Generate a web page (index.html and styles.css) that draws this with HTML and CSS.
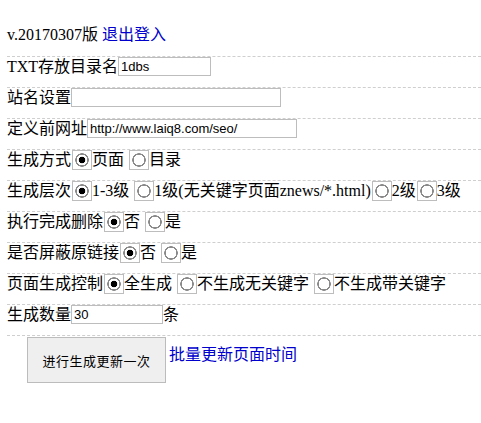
FILE: index.html
```html
<!DOCTYPE html>
<html lang="zh-CN">
<head>
<meta charset="utf-8">
<title>生成设置</title>
<link rel="stylesheet" href="styles.css">
</head>
<body>
<div class="page">
  <div class="row row-first">v.20170307版 <a class="link" href="#">退出登入</a></div>
  <div class="row">TXT存放目录名<input class="txt w93" type="text" value="1dbs"></div>
  <div class="row">站名设置<input class="txt w210" type="text" value=""></div>
  <div class="row">定义前网址<input class="txt w210" type="text" value="http://www.laiq8.com/seo/"></div>
  <div class="row">生成方式<input class="radio" type="radio" name="m" checked>页面 <input class="radio" type="radio" name="m">目录</div>
  <div class="row">生成层次<input class="radio" type="radio" name="l" checked>1-3级 <input class="radio" type="radio" name="l">1级(无关键字页面znews/*.html)<input class="radio" type="radio" name="l">2级<input class="radio" type="radio" name="l">3级</div>
  <div class="row">执行完成删除<input class="radio" type="radio" name="d" checked>否 <input class="radio" type="radio" name="d">是</div>
  <div class="row">是否屏蔽原链接<input class="radio" type="radio" name="s" checked>否 <input class="radio" type="radio" name="s">是</div>
  <div class="row">页面生成控制<input class="radio" type="radio" name="c" checked>全生成 <input class="radio" type="radio" name="c">不生成无关键字 <input class="radio" type="radio" name="c">不生成带关键字</div>
  <div class="row">生成数量<input class="txt w92" type="text" value="30">条</div>
  <div class="row row-last"><button class="btn" type="button">进行生成更新一次</button><a class="link link-side" href="#">批量更新页面时间</a></div>
</div>
</body>
</html>
```
FILE: styles.css
```css
html, body {
  margin: 0;
  padding: 0;
  background: #fff;
}
body {
  font-family: "Liberation Serif", "Noto Sans CJK SC", serif;
  font-size: 16px;
  color: #000;
}
.page {
  padding-left: 7px;
}
.row {
  border-top: 1px dashed #cfcfcf;
  height: 20px;
  line-height: 20px;
  padding-bottom: 10px;
  white-space: nowrap;
}
.row-first {
  border-top: 0;
  padding-top: 25px;
  padding-bottom: 11px;
}
.row-last {
  height: auto;
  display: flex;
  align-items: flex-start;
  padding-bottom: 0;
}
.link {
  color: #0000cc;
  text-decoration: none;
}
.link-side {
  margin-top: 9px;
  line-height: 20px;
}
.txt {
  box-sizing: border-box;
  height: 19px;
  margin: 0;
  padding: 0 2px;
  border: 1px solid #bdbdbd;
  font-family: "Liberation Sans", "Noto Sans CJK SC", sans-serif;
  font-size: 13px;
  color: #000;
  vertical-align: top;
  outline: none;
}
.w93 { width: 93px; }
.w92 { width: 92px; }
.w210 { width: 210px; }
.radio {
  -webkit-appearance: none;
  appearance: none;
  box-sizing: border-box;
  width: 20px;
  height: 20px;
  margin: 0 0 0 1px;
  border: 1px solid #bdbdbd;
  vertical-align: top;
  background: radial-gradient(circle at 50% 50%, #fff 0 5.2px, #8a8a8a 5.5px 6.5px, transparent 7px), #fff;
}
.radio:checked {
  background: radial-gradient(circle at 50% 50%, #000 0 3px, #fff 3.6px 5.2px, #8a8a8a 5.5px 6.5px, transparent 7px), #fff;
}
.btn {
  box-sizing: border-box;
  width: 139px;
  height: 46px;
  margin: 1px 3px 0 20px;
  padding: 0;
  border: 1px solid #bcbcbc;
  background: #efefef;
  font-family: "Noto Sans CJK SC", sans-serif;
  font-size: 13px;
  letter-spacing: 0.5px;
  color: #000;
}
```
